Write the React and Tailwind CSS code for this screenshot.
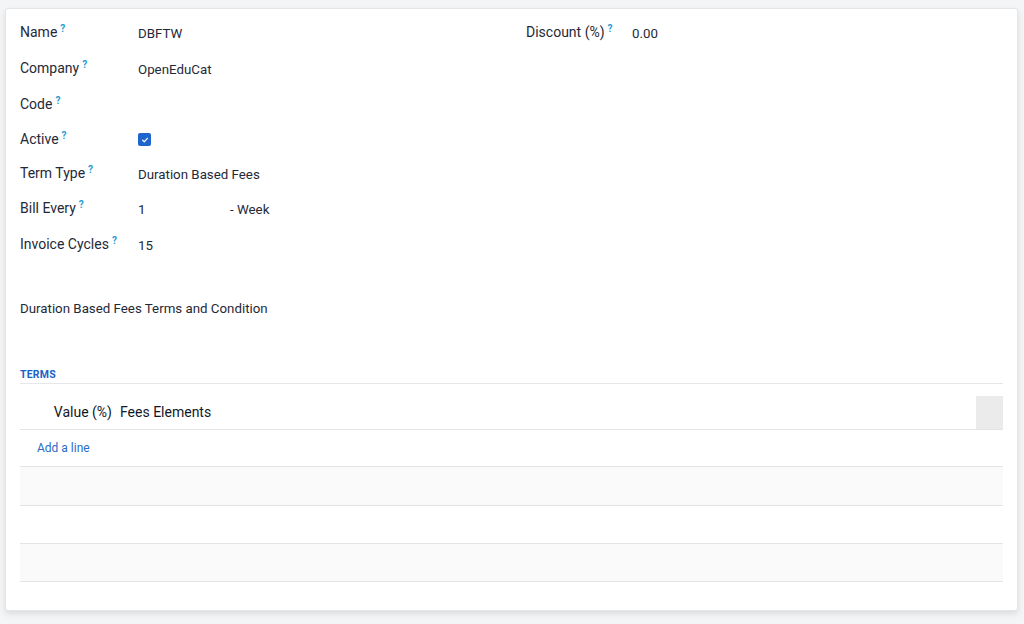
import React from "react";

const font = { fontFamily: "Roboto, 'Noto Sans', sans-serif" };

function Help() {
  return (
    <sup className="ml-[3px] -top-[5px] text-[10px] font-bold text-[#1f9bd1]">?</sup>
  );
}

function Label({ children }) {
  return (
    <span className="text-[14px] leading-5 text-[#1f2937] whitespace-nowrap">
      {children}
      <Help />
    </span>
  );
}

function Field({ label, h = "h-[36px]", labelW = "w-[118px]", children }) {
  return (
    <div className={`flex items-center ${h}`}>
      <div className={`${labelW} shrink-0`}>
        <Label>{label}</Label>
      </div>
      <div className="mt-[3px] text-[13.3px] leading-5 text-[#1f2937]">{children}</div>
    </div>
  );
}

function Checkbox() {
  return (
    <span className="flex h-[13px] w-[13px] items-center justify-center rounded-[2px] bg-[#1f66cc]">
      <svg viewBox="0 0 10 10" className="h-[8px] w-[8px]">
        <path d="M2 5.2 L4.1 7.2 L8 3" fill="none" stroke="white" strokeWidth="1.6" strokeLinecap="round" strokeLinejoin="round" />
      </svg>
    </span>
  );
}

export default function App() {
  return (
    <div style={font} className="h-[624px] w-full bg-[#f4f5f7] pl-[5px] pr-[6px] pt-[8px]">
      <div className="h-[603px] rounded-[3px] border border-[#e3e5e8] bg-white px-[14px] pt-[5px] shadow-[0_3px_6px_rgba(0,0,0,0.10)]">
        <div className="grid grid-cols-[506px_1fr]">
          <div className="flex flex-col">
            <Field label="Name">DBFTW</Field>
            <Field label="Company">OpenEduCat</Field>
            <Field label="Code"></Field>
            <Field label="Active" h="h-[34px]">
              <div className="-mt-[2px]">
                <Checkbox />
              </div>
            </Field>
            <Field label="Term Type" h="h-[34px]">Duration Based Fees</Field>
            <Field label="Bill Every">
              <div className="flex">
                <span className="w-[92px]">1</span>
                <span>- Week</span>
              </div>
            </Field>
            <Field label="Invoice Cycles">15</Field>
          </div>
          <div className="flex flex-col">
            <Field label="Discount (%)" labelW="w-[106px]">0.00</Field>
          </div>
        </div>

        <div className="mt-[37px] text-[13.3px] leading-5 text-[#1f2937]">
          Duration Based Fees Terms and Condition
        </div>

        <div className="mt-[49px] h-[16px] border-b border-[#e6e7ea] text-[10.5px] font-bold leading-[14px] tracking-[0.2px] text-[#1d5fc9]">
          TERMS
        </div>

        <div className="mt-[12px]">
          <div className="flex h-[34px] items-stretch border-b border-[#e3e4e7]">
            <div className="flex w-[96px] items-center justify-end pr-[4px] text-[14px] text-[#111827]">
              Value (%)
            </div>
            <div className="flex flex-1 items-center pl-[4px] text-[14px] text-[#111827]">
              Fees Elements
            </div>
            <div className="w-[27px] bg-[#ebebeb]"></div>
          </div>
          <div className="flex h-[37px] items-center border-b border-[#e3e4e7] pl-[17px] text-[12px] text-[#2a6cc8]">
            Add a line
          </div>
          <div className="h-[39px] border-b border-[#e3e4e7] bg-[#fafafa]"></div>
          <div className="h-[38px] border-b border-[#e3e4e7] bg-white"></div>
          <div className="h-[38px] border-b border-[#e3e4e7] bg-[#fafafa]"></div>
        </div>
      </div>
    </div>
  );
}
